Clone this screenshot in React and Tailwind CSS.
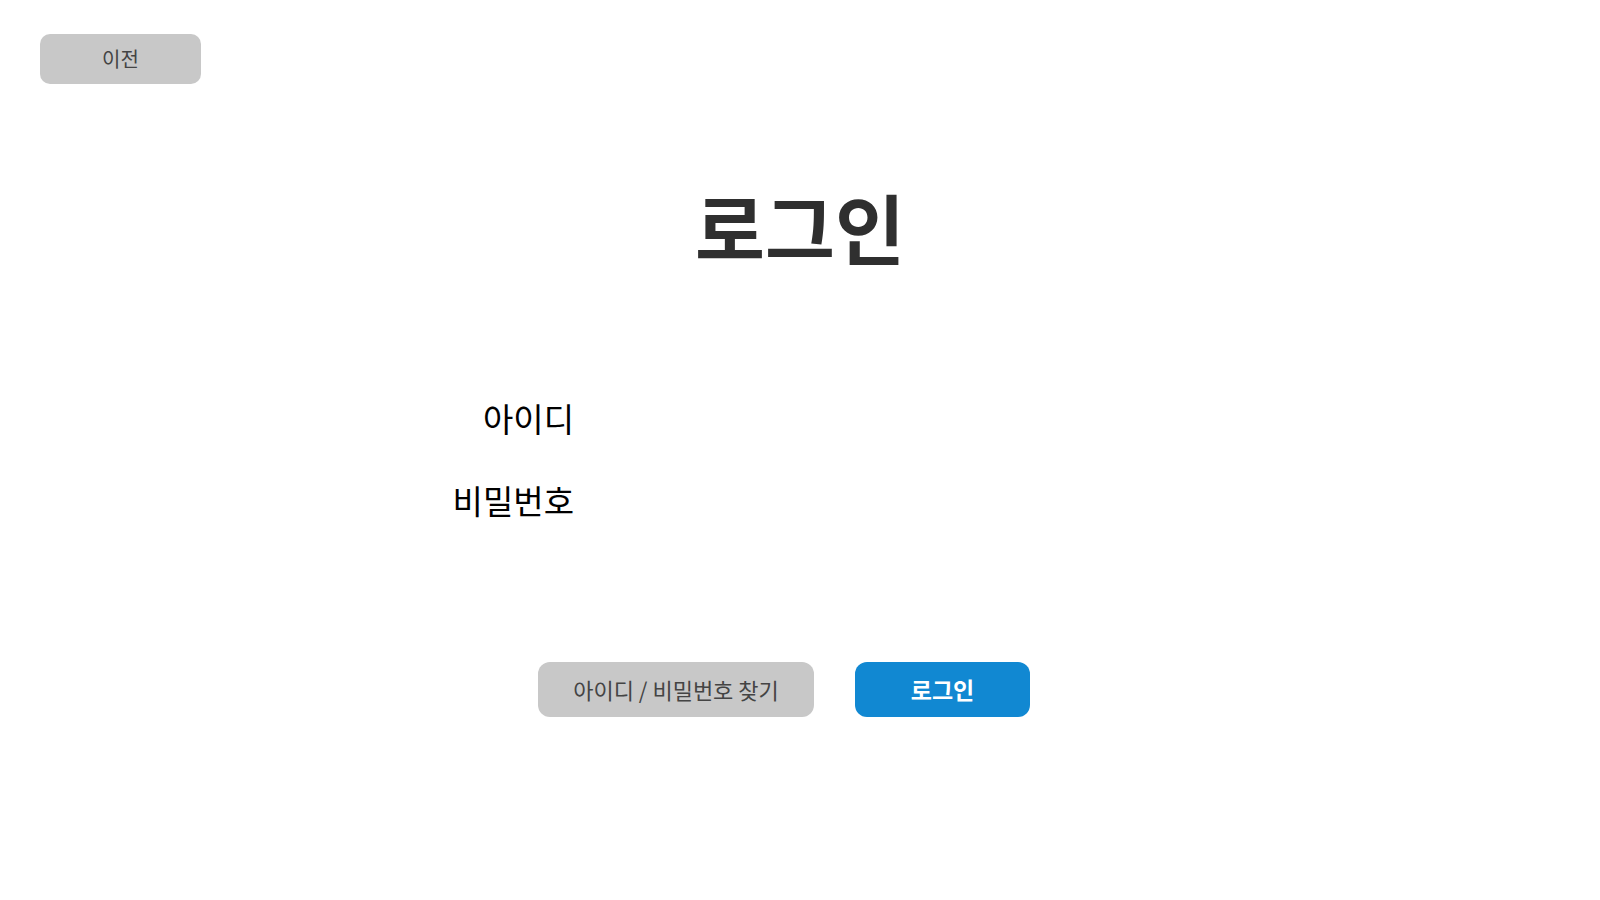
import React, { useState } from "react";

const font = { fontFamily: '"Noto Sans CJK KR", "Noto Sans", sans-serif' };

export default function App() {
    const [userId, setUserId] = useState("");
    const [password, setPassword] = useState("");

    return (
        <div className="min-h-screen w-full bg-white" style={font}>
            {/* top bar */}
            <div className="pl-10 pt-[34px]">
                <button className="w-[161px] h-[50px] rounded-[10px] bg-[#c8c8c8] text-[20px] text-[#444444]">
                    이전
                </button>
            </div>

            <h1 className="mt-[104px] text-center text-[76px] font-bold leading-none text-[#2f2f2f]">로그인</h1>

            {/* form */}
            <div className="mt-[134px] flex flex-col gap-[42px] pl-[434px]">
                <div className="flex items-center">
                    <label className="w-[140px] text-right text-[33px] leading-[40px] text-black">아이디</label>
                    <input
                        className="ml-6 w-[400px] h-[40px] outline-none text-[24px]"
                        value={userId}
                        onChange={(e) => setUserId(e.target.value)}
                    />
                </div>
                <div className="flex items-center">
                    <label className="w-[140px] text-right text-[33px] leading-[40px] text-black">비밀번호</label>
                    <input
                        type="password"
                        className="ml-6 w-[400px] h-[40px] outline-none text-[24px]"
                        value={password}
                        onChange={(e) => setPassword(e.target.value)}
                    />
                </div>
            </div>

            {/* buttons */}
            <div className="mt-[142px] flex justify-center gap-[41px] pr-[32px]">
                <button className="w-[276px] h-[55px] rounded-[12px] bg-[#c8c8c8] text-[22px] text-[#444444]">
                    아이디 / 비밀번호 찾기
                </button>
                <button className="w-[175px] h-[55px] rounded-[12px] bg-[#1188d2] text-[23px] font-bold text-white">
                    로그인
                </button>
            </div>
        </div>
    );
}
